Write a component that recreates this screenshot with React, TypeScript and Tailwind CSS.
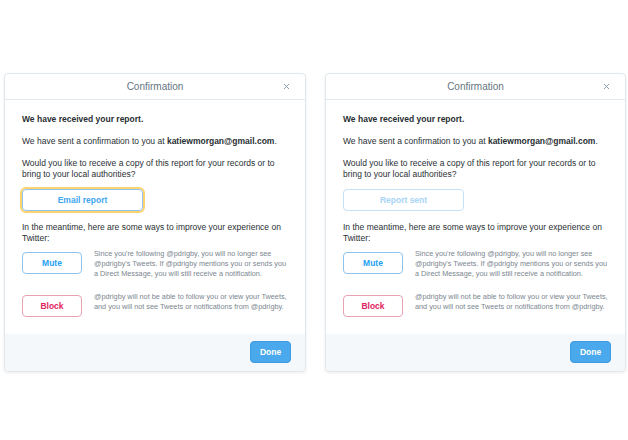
import { X } from 'lucide-react';

function Dialog({ sent, width }: { sent: boolean; width: string }) {
  return (
    <div
      className={`${width} shrink-0 flex flex-col border border-[#e1e8ed] rounded-[4px] bg-white shadow-[0_1px_3px_rgba(0,0,0,0.08)] overflow-hidden`}
    >
      <div className="relative h-[26px] flex items-center justify-center border-b border-[#e1e8ed]">
        <span className="text-[10px] text-[#66757f]">Confirmation</span>
        <X className="absolute right-[14px] top-[8px] w-[9px] h-[9px] text-[#8899a6]" strokeWidth={2.5} />
      </div>

      <div className="px-[17px] pt-[14px] pb-[17px] text-[8.5px] leading-[11px] text-[#292f33]">
        <p className="font-bold">We have received your report.</p>
        <p className="mt-[11px]">
          We have sent a confirmation to you at <span className="font-bold">katiewmorgan@gmail.com</span>.
        </p>
        <p className="mt-[11px]">
          Would you like to receive a copy of this report for your records or to bring to your local authorities?
        </p>

        {sent ? (
          <button className="mt-[9px] w-[121px] h-[22px] rounded-[4px] border border-[#c4e1f8] text-[#a8d4f6] font-bold">
            Report sent
          </button>
        ) : (
          <button className="mt-[9px] w-[121px] h-[22px] rounded-[4px] border border-[#8ec3ee] text-[#3fa6ef] font-bold ring-2 ring-[#fdd36e]">
            Email report
          </button>
        )}

        <p className="mt-[11px]">In the meantime, here are some ways to improve your experience on Twitter:</p>

        <div className="mt-[5px] flex items-start gap-[12px]">
          <button className="mt-[3px] shrink-0 w-[60px] h-[22px] rounded-[4px] border border-[#8ec3ee] text-[#1da1f2] font-bold">
            Mute
          </button>
          <p className="text-[7.3px] leading-[9.75px] text-[#7b868f]">
            Since you're following @pdrigby, you will no longer see @pdrigby's Tweets. If @pdrigby mentions you or sends
            you a Direct Message, you will still receive a notification.
          </p>
        </div>

        <div className="mt-[14px] flex items-start gap-[12px]">
          <button className="mt-[3px] shrink-0 w-[60px] h-[22px] rounded-[4px] border border-[#e8a3b2] text-[#e0245e] font-bold">
            Block
          </button>
          <p className="text-[7.3px] leading-[9.75px] text-[#7b868f]">
            @pdrigby will not be able to follow you or view your Tweets, and you will not see Tweets or notifications
            from @pdrigby.
          </p>
        </div>
      </div>

      <div className="h-[37px] bg-[#f5f8fa] flex items-start justify-end pt-[7px] pr-[14px]">
        <button className="w-[41px] h-[22px] rounded-[4px] bg-[#4aa8ec] border border-[#3d9ae0] text-white text-[8.5px] font-bold">
          Done
        </button>
      </div>
    </div>
  );
}

export default function App() {
  return (
    <div
      className="w-[628px] h-[440px] bg-white flex items-start gap-[19px] pl-[4px] pt-[73px]"
      style={{ fontFamily: '"Liberation Sans", Arial, sans-serif' }}
    >
      <Dialog sent={false} width="w-[302px]" />
      <Dialog sent={true} width="w-[301px]" />
    </div>
  );
}
